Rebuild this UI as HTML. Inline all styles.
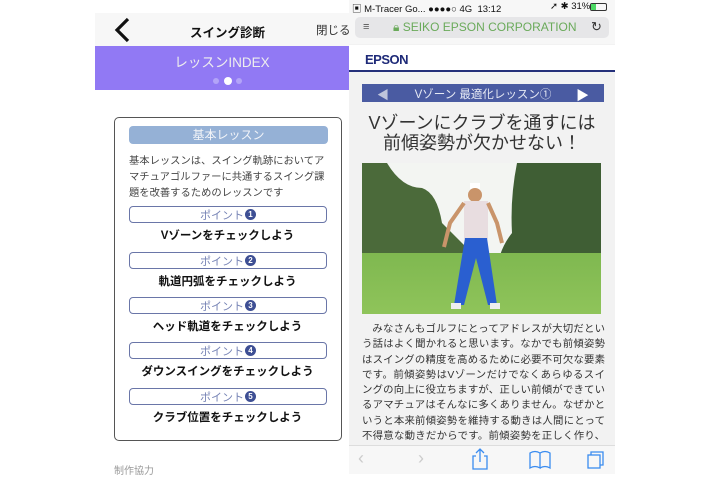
<!DOCTYPE html>
<html><head><meta charset="utf-8"><style>
*{margin:0;padding:0;box-sizing:border-box}
body{width:710px;height:474px;background:#fff;position:relative;overflow:hidden;font-family:"Liberation Sans","Noto Sans CJK JP",sans-serif}
.a{position:absolute}
.pill{position:absolute;left:129px;width:198px;height:17px;border:1px solid #6a76a8;border-radius:4px;display:flex;align-items:center;justify-content:center;font-size:11px;color:#7683b5}
.pill b{display:inline-block;width:11px;height:11px;border-radius:50%;background:#3e4f94;color:#fff;font-size:8px;line-height:11px;text-align:center;margin-left:1px}
.lbl{position:absolute;left:114px;width:227px;text-align:center;font-size:11.5px;font-weight:bold;color:#111;line-height:14px}
</style></head><body>
<div class="a" style="left:95px;top:0;width:254px;height:474px;background:#fff"></div>
<div class="a" style="left:95px;top:13px;width:254px;height:33px;background:#f7f7f7"></div>
<svg class="a" style="left:112px;top:16px" width="20" height="28"><path d="M16 3 L5 14 L16 25" stroke="#111" stroke-width="3.2" fill="none"/></svg>
<div class="a" style="left:190px;top:22px;font-size:12.5px;font-weight:bold;color:#111">スイング診断</div>
<div class="a" style="left:316px;top:22px;font-size:11.5px;color:#333">閉じる</div>
<div class="a" style="left:95px;top:46px;width:254px;height:44px;background:#9179f4"></div>
<div class="a" style="left:95px;top:51px;width:254px;text-align:center;font-size:13.5px;color:#eee">レッスンINDEX</div>
<div class="a" style="left:213px;top:78px;width:6px;height:6px;border-radius:50%;background:#b3a4f8"></div>
<div class="a" style="left:224px;top:77px;width:8px;height:8px;border-radius:50%;background:#fff"></div>
<div class="a" style="left:236px;top:78px;width:6px;height:6px;border-radius:50%;background:#b3a4f8"></div>
<div class="a" style="left:114px;top:117px;width:228px;height:324px;border:1.5px solid #555;border-radius:5px"></div>
<div class="a" style="left:129px;top:126px;width:199px;height:18px;background:#95b1d6;border-radius:4px;text-align:center;font-size:12px;line-height:18px;color:#f2f4f8">基本レッスン</div>
<div class="a" style="left:129px;top:154px;width:198px;font-size:10.3px;line-height:16px;color:#444">基本レッスンは、スイング軌跡においてアマチュアゴルファーに共通するスイング課題を改善するためのレッスンです</div>
<div class="pill" style="top:206px">ポイント<b>1</b></div><div class="lbl" style="top:229px">Vゾーンをチェックしよう</div>
<div class="pill" style="top:252px">ポイント<b>2</b></div><div class="lbl" style="top:275px">軌道円弧をチェックしよう</div>
<div class="pill" style="top:297px">ポイント<b>3</b></div><div class="lbl" style="top:320px">ヘッド軌道をチェックしよう</div>
<div class="pill" style="top:342px">ポイント<b>4</b></div><div class="lbl" style="top:365px">ダウンスイングをチェックしよう</div>
<div class="pill" style="top:388px">ポイント<b>5</b></div><div class="lbl" style="top:411px">クラブ位置をチェックしよう</div>
<div class="a" style="left:114px;top:462px;font-size:10px;color:#999">制作協力</div>
<div class="a" style="left:349px;top:0;width:266px;height:474px;background:#f2f2f2"></div>
<div class="a" style="left:349px;top:0;width:266px;height:44px;background:#f7f7f7"></div>
<div class="a" style="left:352px;top:1px;font-size:9.5px;color:#111;white-space:nowrap">▣ M-Tracer Go... ●●●●○ 4G &nbsp;13:12</div>
<div class="a" style="left:550px;top:1px;font-size:9.5px;color:#111;white-space:nowrap">➚ ✱ 31%</div>
<div class="a" style="left:590px;top:3px;width:17px;height:8px;border:1px solid #333;border-radius:2px"><div style="width:5px;height:6px;background:#4cd964"></div></div>
<div class="a" style="left:355px;top:17px;width:254px;height:21px;background:#e6e6e8;border-radius:5px"></div>
<div class="a" style="left:363px;top:21px;font-size:11px;color:#555">≡</div>
<div class="a" style="left:393px;top:20px;font-size:12px;color:#6aaa5a;white-space:nowrap">🔒︎ SEIKO EPSON CORPORATION</div>
<div class="a" style="left:591px;top:19px;font-size:13px;color:#333">↻</div>
<div class="a" style="left:349px;top:45px;width:266px;height:27px;background:#fff;border-bottom:2px solid #24307a"></div>
<div class="a" style="left:365px;top:52px;font-size:13px;font-weight:bold;color:#1e2a78;letter-spacing:-0.5px">EPSON</div>
<div class="a" style="left:362px;top:84px;width:242px;height:18px;background:#4a5ba2"></div>
<div class="a" style="left:377px;top:86px;font-size:12px;color:#bfc5dc">◀</div>
<div class="a" style="left:576px;top:85px;font-size:13px;color:#fff">▶</div>
<div class="a" style="left:362px;top:86px;width:242px;text-align:center;font-size:11.5px;color:#e6e9f4">Vゾーン 最適化レッスン①</div>
<div class="a" style="left:349px;top:113px;width:266px;text-align:center;font-size:18px;line-height:20px;color:#333">Vゾーンにクラブを通すには<br>前傾姿勢が欠かせない！</div>
<svg class="a" style="left:362px;top:163px" width="239" height="151">
<defs><linearGradient id="g" x1="0" y1="0" x2="0" y2="1"><stop offset="0" stop-color="#7fb850"/><stop offset="1" stop-color="#8fc45a"/></linearGradient></defs>
<rect width="239" height="151" fill="#f3f5f2"/>
<path d="M0 0 H25 Q40 25 60 25 Q75 30 80 60 Q95 75 105 85 V92 H0Z" fill="#4b6a3a"/>
<path d="M155 0 H239 V105 H135 Q138 85 150 70 Q148 35 155 0Z" fill="#3f5e34"/>
<rect y="90" width="239" height="61" fill="url(#g)"/>
<rect x="108" y="20" width="10" height="8" fill="#fff"/>
<circle cx="113" cy="32" r="7" fill="#c9946a"/>
<rect x="102" y="38" width="24" height="38" fill="#e8dde0"/>
<path d="M102 40 L88 60 L82 84" stroke="#c9946a" stroke-width="4" fill="none"/>
<path d="M126 40 L135 60 L140 80" stroke="#c9946a" stroke-width="4" fill="none"/>
<path d="M103 75 H125 L135 142 H126 L114 95 L102 142 H92Z" fill="#2a5fd0"/>
<rect x="89" y="140" width="10" height="6" fill="#eee"/><rect x="128" y="140" width="10" height="6" fill="#eee"/>
</svg>
<div class="a" style="left:362px;top:322px;width:243px;font-size:10.4px;line-height:15.3px;color:#333;text-indent:1em;text-align:justify">みなさんもゴルフにとってアドレスが大切だという話はよく聞かれると思います。なかでも前傾姿勢はスイングの精度を高めるために必要不可欠な要素です。前傾姿勢はVゾーンだけでなくあらゆるスイングの向上に役立ちますが、正しい前傾ができているアマチュアはそんなに多くありません。なぜかというと本来前傾姿勢を維持する動きは人間にとって不得意な動きだからです。前傾姿勢を正しく作り、スイング中にそれを維持することができれば多くのスイン</div>
<div class="a" style="left:349px;top:445px;width:266px;height:29px;background:#f7f7f7;border-top:1px solid #ddd"></div>
<div class="a" style="left:358px;top:448px;font-size:18px;color:#ccc">‹</div>
<div class="a" style="left:418px;top:448px;font-size:18px;color:#ccc">›</div>
<svg class="a" style="left:470px;top:447px" width="140" height="24" fill="none" stroke="#3a8cf0" stroke-width="1.3">
<path d="M6 9 H3 V22 H17 V9 H14 M10 15 V2 M6 6 L10 2 L14 6"/>
<path d="M60 6 Q65 3 70 6 V21 Q65 18 60 21Z M70 6 Q75 3 80 6 V21 Q75 18 70 21"/>
<rect x="118" y="8" width="12" height="13"/><path d="M121 8 V5 H133 V18 H130"/>
</svg>
</body></html>
